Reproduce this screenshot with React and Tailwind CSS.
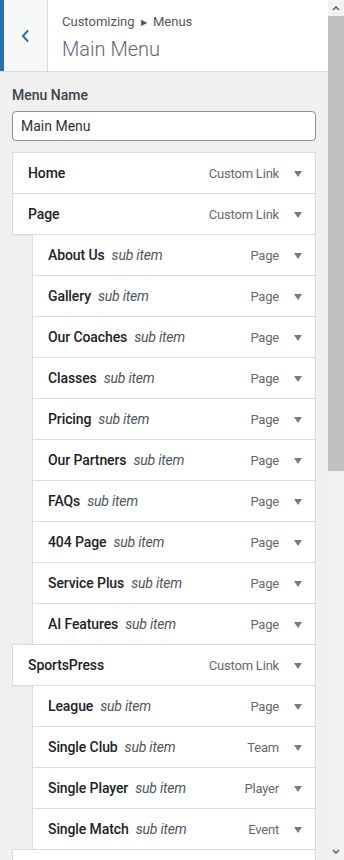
// Customizer - Menus panel
const items = [
  { title: 'Home', type: 'Custom Link' },
  { title: 'Page', type: 'Custom Link' },
  { title: 'About Us', type: 'Page', sub: true },
  { title: 'Gallery', type: 'Page', sub: true },
  { title: 'Our Coaches', type: 'Page', sub: true },
  { title: 'Classes', type: 'Page', sub: true },
  { title: 'Pricing', type: 'Page', sub: true },
  { title: 'Our Partners', type: 'Page', sub: true },
  { title: 'FAQs', type: 'Page', sub: true },
  { title: '404 Page', type: 'Page', sub: true },
  { title: 'Service Plus', type: 'Page', sub: true },
  { title: 'AI Features', type: 'Page', sub: true },
  { title: 'SportsPress', type: 'Custom Link' },
  { title: 'League', type: 'Page', sub: true },
  { title: 'Single Club', type: 'Team', sub: true },
  { title: 'Single Player', type: 'Player', sub: true },
  { title: 'Single Match', type: 'Event', sub: true },
  { title: '', type: '' },
];

function Arrow() {
  return (
    <svg width="8" height="6" viewBox="0 0 8 6" className="ml-[15px] shrink-0">
      <polygon points="0,0 8,0 4,6" fill="#787c82" />
    </svg>
  );
}

function MenuItem({ item, first }) {
  return (
    <div className={item.sub ? 'pl-5' : ''}>
      <div
        className={`flex items-center h-[42px] pt-px bg-white border border-[#dcdcde] pl-[15px] pr-[13px] shadow-[0_1px_1px_rgba(0,0,0,0.04)] ${first ? '' : '-mt-px'}`}
      >
        {item.title && (
          <>
            <span className="text-[14px] font-medium tracking-[-0.1px] text-[#1d2327]">{item.title}</span>
            {item.sub && <span className="ml-[7px] text-[14px] italic tracking-[-0.2px] text-[#50575e]">sub item</span>}
            <span className="ml-auto text-[13px] tracking-[-0.2px] text-[#646970]">{item.type}</span>
            <Arrow />
          </>
        )}
      </div>
    </div>
  );
}

export default function App() {
  return (
    <div className="flex h-[860px] w-[344px] overflow-hidden bg-[#f0f0f1] font-['Roboto',sans-serif]">
      {/* Main panel */}
      <div className="w-[328px] flex flex-col">
        {/* Header */}
        <div className="flex h-[72px] shrink-0 bg-white border-b border-[#dcdcde]">
          <div className="w-1 bg-[#2271b1]" />
          <div className="w-[44px] bg-[#f6f7f7] border-r border-[#dcdcde] flex items-center justify-center">
            <svg width="9" height="14" viewBox="0 0 9 14">
              <polyline points="7,1.5 2,7 7,12.5" fill="none" stroke="#2271b1" strokeWidth="2" />
            </svg>
          </div>
          <div className="pl-[14px] pt-[12px]">
            <div className="text-[13px] leading-5 text-[#50575e]">
              Customizing <span className="text-[8px] align-middle mx-[3px]">▶</span> Menus
            </div>
            <div className="mt-[4px] text-[20px] leading-6 font-light text-[#646970]">Main Menu</div>
          </div>
        </div>

        {/* Body */}
        <div className="px-3 pt-[13px]">
          <div className="text-[14px] leading-5 font-medium text-[#3c434a]">Menu Name</div>
          <div className="mt-[6px] h-[30px] border border-[#8c8f94] rounded bg-white flex items-center px-2 text-[14px] text-[#2c3338]">
            Main Menu
          </div>

          {/* Menu items */}
          <div className="mt-[11px]">
            {items.map((item, i) => (
              <MenuItem key={i} item={item} first={i === 0} />
            ))}
          </div>
        </div>
      </div>

      {/* Scrollbar */}
      <div className="w-4 flex flex-col bg-[#f1f1f1]">
        <div className="h-4 flex items-center justify-center">
          <svg width="8" height="6" viewBox="0 0 8 6">
            <polyline points="1,5 4,2 7,5" fill="none" stroke="#505050" strokeWidth="1.3" />
          </svg>
        </div>
        <div className="h-[455px] bg-[#c1c1c1]" />
        <div className="flex-1" />
        <div className="h-4 flex items-center justify-center">
          <svg width="8" height="6" viewBox="0 0 8 6">
            <polyline points="1,1 4,4 7,1" fill="none" stroke="#505050" strokeWidth="1.3" />
          </svg>
        </div>
      </div>
    </div>
  );
}
